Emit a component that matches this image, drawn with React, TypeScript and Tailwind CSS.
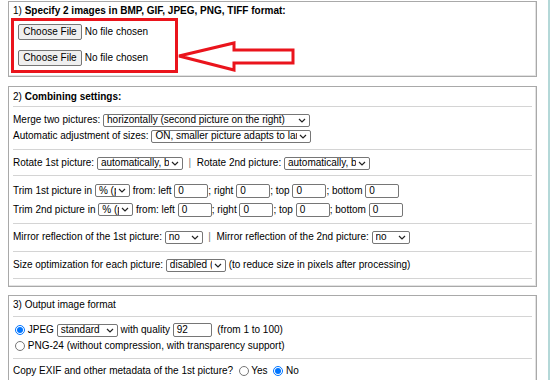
import type { ReactNode } from "react";

function Chevron() {
  return (
    <span className="w-[12px] h-full flex items-center justify-center shrink-0">
      <svg width="8" height="5" viewBox="0 0 8 5">
        <path d="M1 1 L4 4 L7 1" fill="none" stroke="#222" strokeWidth="1.2" />
      </svg>
    </span>
  );
}

// fake native select, so the clipped text matches the screenshot
function Select({ value, w }: { value: string; w: string }) {
  return (
    <span
      className={`${w} h-[13px] inline-flex items-center border border-[#767676] rounded-[2px] bg-white pl-[3px] pr-[1px] overflow-hidden`}
    >
      <span className="flex-1 overflow-hidden whitespace-nowrap">{value}</span>
      <Chevron />
    </span>
  );
}

function Field({ value, w = "w-[34px]" }: { value: string; w?: string }) {
  return (
    <span className={`${w} h-[14px] inline-flex items-center border border-[#767676] rounded-[2px] bg-white pl-[3px]`}>
      {value}
    </span>
  );
}

function Radio({ checked }: { checked?: boolean }) {
  if (checked) {
    return (
      <span className="w-[10px] h-[10px] rounded-full border border-[#0075ff] bg-white inline-flex items-center justify-center shrink-0">
        <span className="w-[6px] h-[6px] rounded-full bg-[#0075ff]" />
      </span>
    );
  }
  return <span className="w-[10px] h-[10px] rounded-full border border-[#767676] bg-white inline-block shrink-0" />;
}

function Row({ children, h = "h-[16px]" }: { children: ReactNode; h?: string }) {
  return <div className={`flex items-center whitespace-pre ${h}`}>{children}</div>;
}

function Hr() {
  return <div className="h-px bg-[#d4d4d4]" />;
}

function FileRow() {
  return (
    <div className="flex items-center h-[16px] whitespace-pre">
      <span className="w-[64px] h-[16px] inline-flex items-center justify-center bg-[#efefef] border border-[#767676] rounded-[2px]">
        Choose File
      </span>
      <span> No file chosen</span>
    </div>
  );
}

export default function App() {
  const box = "border border-[#a9a9a9] shadow-[inset_-1px_-1px_0_#e2e2e2] bg-white px-[4px]";

  return (
    <div className="w-[552px] h-[380px] overflow-hidden bg-white flex text-[10px] leading-[12px] text-black font-['Liberation_Sans',Arial,sans-serif]">
      <div className="w-[548px] shrink-0 pl-[8px] pr-[11px]">
        {/* 1) files */}
        <div className={`${box} mt-[1px] h-[76px] pt-[2px] relative`}>
          <div className="h-[14px] flex items-center whitespace-pre">
            1) <b>Specify 2 images in BMP, GIF, JPEG, PNG, TIFF format:</b>
          </div>
          <div className="flex flex-col gap-[10px] mt-[6px] ml-[5px]">
            <FileRow />
            <FileRow />
          </div>
          {/* annotation drawn over the form */}
          <div className="absolute left-[2px] top-[16px] w-[167px] h-[55px] border-[3px] border-[#ea141c]" />
          <svg className="absolute left-[160px] top-[30px]" width="140" height="44" viewBox="160 30 140 44">
            <path
              d="M170 54 L225 41 L225 48 L284 48 L284 61 L225 61 L225 68 Z"
              fill="none"
              stroke="#ea141c"
              strokeWidth="3"
              strokeLinejoin="miter"
            />
          </svg>
        </div>

        {/* 2) combining */}
        <div className={`${box} mt-[9px] h-[201px] pt-[3px]`}>
          <div className="h-[14px] flex items-center whitespace-pre">
            2) <b>Combining settings:</b>
          </div>
          <div className="mt-[2px]"><Hr /></div>
          <div className="mt-[5px]">
            <Row>
              Merge two pictures: <Select w="w-[207px]" value="horizontally (second picture on the right)" />
            </Row>
            <Row>
              Automatic adjustment of sizes: <Select w="w-[160px]" value="ON, smaller picture adapts to larger" />
            </Row>
          </div>
          <div className="mt-[5px]"><Hr /></div>
          <div className="mt-[5px]">
            <Row>
              Rotate 1st picture: <Select w="w-[86px]" value="automatically, by EXIF" />
              <span className="text-[#777]">  |  </span>
              Rotate 2nd picture: <Select w="w-[86px]" value="automatically, by EXIF" />
            </Row>
          </div>
          <div className="mt-[4px]"><Hr /></div>
          <div className="mt-[5px]">
            <Row h="h-[19px]">
              Trim 1st picture in <Select w="w-[35px]" value="% (percent)" /> from: left <Field value="0" />; right{" "}
              <Field value="0" />; top <Field value="0" />; bottom <Field value="0" />
            </Row>
            <Row h="h-[19px]">
              Trim 2nd picture in <Select w="w-[35px]" value="% (percent)" /> from: left <Field value="0" />; right{" "}
              <Field value="0" />; top <Field value="0" />; bottom <Field value="0" />
            </Row>
          </div>
          <div className="mt-[4px]"><Hr /></div>
          <div className="mt-[5px]">
            <Row>
              Mirror reflection of the 1st picture: <Select w="w-[38px]" value="no" />
              <span className="text-[#777]">  |  </span>
              Mirror reflection of the 2nd picture: <Select w="w-[38px]" value="no" />
            </Row>
          </div>
          <div className="mt-[6px]"><Hr /></div>
          <div className="mt-[5px]">
            <Row>
              Size optimization for each picture: <Select w="w-[60px]" value="disabled (no optimization)" /> (to reduce size in pixels after processing)
            </Row>
          </div>
          <div className="mt-[5px]"><Hr /></div>
        </div>

        {/* 3) output format */}
        <div className={`${box} mt-[8px] h-[120px] pt-[2px]`}>
          <div className="h-[14px] flex items-center whitespace-pre">3) Output image format</div>
          <div className="mt-[4px]"><Hr /></div>
          <div className="mt-[5px] pl-[2px]">
            <Row>
              <Radio checked /> JPEG <Select w="w-[61px]" value="standard" /> with quality <Field value="92" w="w-[39px]" />  (from 1 to 100)
            </Row>
            <Row>
              <Radio /> PNG-24 (without compression, with transparency support)
            </Row>
          </div>
          <div className="mt-[4px]"><Hr /></div>
          <div className="mt-[4px]">
            <Row>
              Copy EXIF and other metadata of the 1st picture?  <Radio /> Yes  <Radio checked /> No
            </Row>
          </div>
        </div>
      </div>
      <div className="w-[2px] bg-[#b4d8d8] shrink-0" />
    </div>
  );
}
